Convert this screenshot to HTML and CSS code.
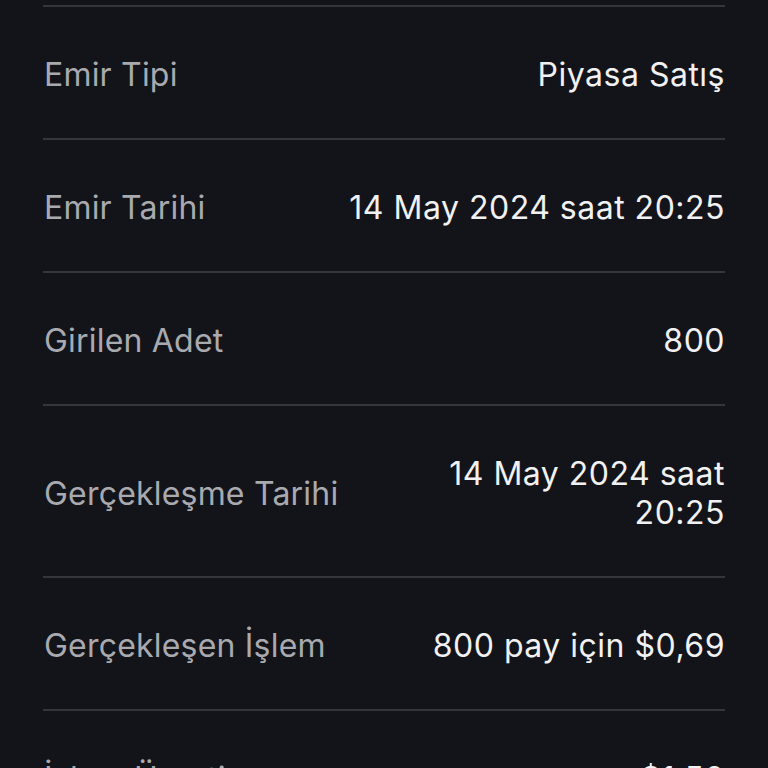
FILE: index.html
```html
<!DOCTYPE html>
<html lang="tr">
<head>
<meta charset="utf-8">
<link rel="stylesheet" href="styles.css">
</head>
<body>
<div class="list">
  <div class="row"><span class="label">Emir Tipi</span><span class="value">Piyasa Satış</span></div>
  <div class="row"><span class="label">Emir Tarihi</span><span class="value">14 May 2024 saat 20:25</span></div>
  <div class="row"><span class="label">Girilen Adet</span><span class="value">800</span></div>
  <div class="row"><span class="label">Gerçekleşme Tarihi</span><span class="value narrow">14 May 2024 saat 20:25</span></div>
  <div class="row"><span class="label">Gerçekleşen İşlem</span><span class="value">800 pay için $0,69</span></div>
  <div class="row"><span class="label">İşlem Ücreti</span><span class="value">$1,50</span></div>
</div>
</body>
</html>
```
FILE: styles.css
```css
html, body {
  margin: 0;
  padding: 0;
  background: #131419;
  height: 768px;
  overflow: hidden;
}
body {
  font-family: Inter, "Noto Sans", sans-serif;
}
.list {
  margin: 5px 43px 0 43px;
  border-top: 2px solid #35363b;
}
.row {
  display: flex;
  justify-content: space-between;
  align-items: center;
  padding: 48px 0 44px 0;
  border-bottom: 2px solid #35363b;
  font-size: 32px;
  letter-spacing: 0.4px;
  line-height: 39px;
}
.label {
  color: #a9aaaf;
  padding-left: 1px;
  letter-spacing: 0.2px;
}
.value {
  color: #f1f1f3;
  text-align: right;
  letter-spacing: 0.5px;
}
.narrow {
  max-width: 300px;
}
```
